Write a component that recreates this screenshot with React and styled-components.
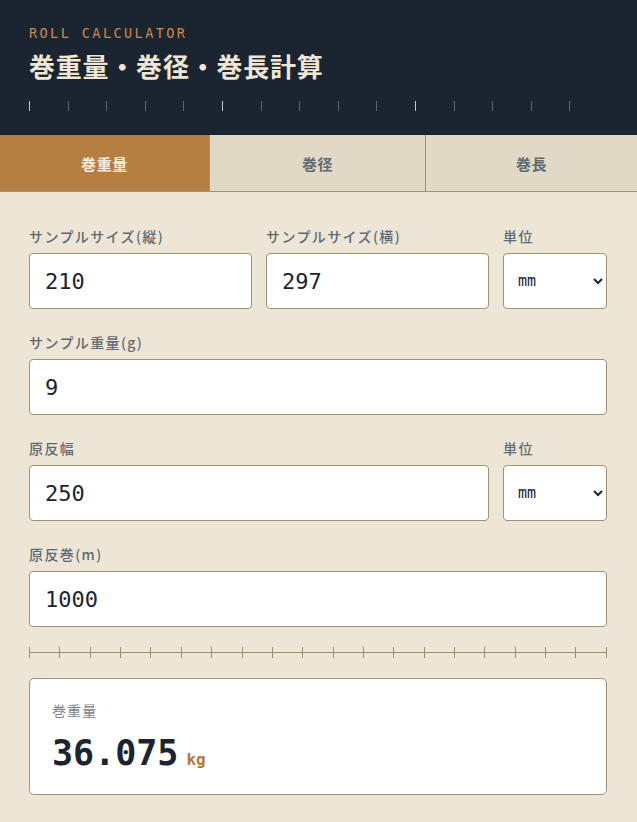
import { useState } from 'react';
import styled, { createGlobalStyle } from 'styled-components';

const GlobalStyle = createGlobalStyle`
  * {
    box-sizing: border-box;
  }
  body {
    margin: 0;
    background: #ede6d7;
    font-family: 'Noto Sans CJK JP', 'Noto Sans', sans-serif;
  }
`;

const TABS = ['巻重量', '巻径', '巻長'];

function App() {
  const [tab, setTab] = useState(0);
  const [inputs, setInputs] = useState({
    height: '210',
    width: '297',
    sizeUnit: 'mm',
    weight: '9',
    rollWidth: '250',
    rollUnit: 'mm',
    length: '1000',
  });

  const handleChange = (e) => {
    const { name, value } = e.target;
    setInputs({ ...inputs, [name]: value });
  };

  return (
    <StPage>
      <GlobalStyle />
      <StHeader>
        <StEyebrow>ROLL CALCULATOR</StEyebrow>
        <StTitle>巻重量・巻径・巻長計算</StTitle>
        <StScale>
          {Array.from({ length: 15 }).map((_, i) => (
            <StScaleTick key={i} major={i % 5 === 0} />
          ))}
        </StScale>
      </StHeader>

      <StTabs>
        {TABS.map((label, i) => (
          <StTab key={label} active={tab === i} onClick={() => setTab(i)}>
            {label}
          </StTab>
        ))}
      </StTabs>

      <StForm>
        <StRow cols="1fr 1fr 104px">
          <StField>
            <StLabel>サンプルサイズ(縦)</StLabel>
            <StInput name="height" value={inputs.height} onChange={handleChange} />
          </StField>
          <StField>
            <StLabel>サンプルサイズ(横)</StLabel>
            <StInput name="width" value={inputs.width} onChange={handleChange} />
          </StField>
          <StField>
            <StLabel>単位</StLabel>
            <StSelect name="sizeUnit" value={inputs.sizeUnit} onChange={handleChange}>
              <option value="mm">mm</option>
              <option value="cm">cm</option>
            </StSelect>
          </StField>
        </StRow>

        <StRow cols="1fr">
          <StField>
            <StLabel>サンプル重量(g)</StLabel>
            <StInput name="weight" value={inputs.weight} onChange={handleChange} />
          </StField>
        </StRow>

        <StRow cols="1fr 104px">
          <StField>
            <StLabel>原反幅</StLabel>
            <StInput name="rollWidth" value={inputs.rollWidth} onChange={handleChange} />
          </StField>
          <StField>
            <StLabel>単位</StLabel>
            <StSelect name="rollUnit" value={inputs.rollUnit} onChange={handleChange}>
              <option value="mm">mm</option>
              <option value="cm">cm</option>
            </StSelect>
          </StField>
        </StRow>

        <StRow cols="1fr">
          <StField>
            <StLabel>原反巻(m)</StLabel>
            <StInput name="length" value={inputs.length} onChange={handleChange} />
          </StField>
        </StRow>

        <StRuler>
          {Array.from({ length: 20 }).map((_, i) => (
            <StRulerTick key={i} />
          ))}
        </StRuler>

        <StResult>
          <StResultLabel>巻重量</StResultLabel>
          <StResultValue>
            36.075<StUnit>kg</StUnit>
          </StResultValue>
        </StResult>
      </StForm>
    </StPage>
  );
}

export default App;

const StPage = styled.div`
  width: 100%;
  min-height: 822px;
  background: #ede6d7;
`;

const StHeader = styled.header`
  background: #1b2531;
  padding: 25px 29px 24px;
`;

const StEyebrow = styled.div`
  font-family: 'DejaVu Sans Mono', monospace;
  font-size: 13.5px;
  line-height: 16px;
  letter-spacing: 0.18em;
  color: #c98a4b;
`;

const StTitle = styled.h1`
  margin: 8px 0 0;
  font-size: 26px;
  line-height: 34px;
  font-weight: 700;
  letter-spacing: 0.03em;
  color: #efe6d5;
`;

const StScale = styled.div`
  display: flex;
  margin-top: 18px;
  height: 10px;
`;

const StScaleTick = styled.span`
  flex: 1;
  border-left: 1px solid ${(props) => (props.major ? '#c9c7c0' : '#5d6772')};
`;

const StTabs = styled.nav`
  display: grid;
  grid-template-columns: 209px 216px 1fr;
  border-bottom: 1px solid #a39272;
`;

const StTab = styled.button`
  height: 56px;
  border: 0;
  border-left: 1px solid #a39272;
  padding: 0;
  font-family: inherit;
  font-size: 15px;
  font-weight: 700;
  letter-spacing: 0.04em;
  color: ${(props) => (props.active ? '#f4ecda' : '#5e6a73')};
  background: ${(props) => (props.active ? '#b47f41' : '#e1d9c6')};
  cursor: pointer;
  &:first-child {
    border-left: 0;
  }
`;

const StForm = styled.main`
  display: flex;
  flex-direction: column;
  padding: 34px 30px 28px 29px;
`;

const StRow = styled.div`
  display: grid;
  grid-template-columns: ${(props) => props.cols};
  column-gap: 14px;
  margin-bottom: 23px;
`;

const StField = styled.label`
  display: flex;
  flex-direction: column;
  min-width: 0;
`;

const StLabel = styled.span`
  font-size: 14px;
  line-height: 20px;
  font-weight: 500;
  letter-spacing: 0.1em;
  color: #5e6a73;
  margin-bottom: 7px;
`;

const StInput = styled.input`
  width: 100%;
  height: 56px;
  padding: 0 15px;
  border: 1px solid #a39272;
  border-radius: 4px;
  background: #fff;
  font-family: 'DejaVu Sans Mono', monospace;
  font-size: 22px;
  color: #1b2531;
  &:focus {
    outline: none;
  }
`;

const StSelect = styled.select`
  width: 100%;
  height: 56px;
  padding: 0 6px 0 10px;
  border: 1px solid #a39272;
  border-radius: 4px;
  background: #fff;
  font-family: 'DejaVu Sans Mono', monospace;
  font-size: 15px;
  color: #1b2531;
  &:focus {
    outline: none;
  }
`;

const StRuler = styled.div`
  display: flex;
  justify-content: space-between;
  height: 11px;
  margin: -3px 0 20px;
  background: linear-gradient(#9d8e6c, #9d8e6c) center / 100% 1px no-repeat;
`;

const StRulerTick = styled.span`
  width: 1px;
  background: #9d8e6c;
`;

const StResult = styled.section`
  padding: 21px 22px 12px;
  border: 1px solid #a39272;
  border-radius: 5px;
  background: #fff;
`;

const StResultLabel = styled.div`
  font-size: 14px;
  line-height: 20px;
  letter-spacing: 0.08em;
  color: #7b838a;
  margin-bottom: 11px;
`;

const StResultValue = styled.div`
  font-family: 'DejaVu Sans Mono', monospace;
  font-size: 35px;
  line-height: 44px;
  font-weight: 600;
  color: #1b2531;
`;

const StUnit = styled.span`
  margin-left: 8px;
  font-size: 16px;
  font-weight: 700;
  color: #b07a3e;
`;
